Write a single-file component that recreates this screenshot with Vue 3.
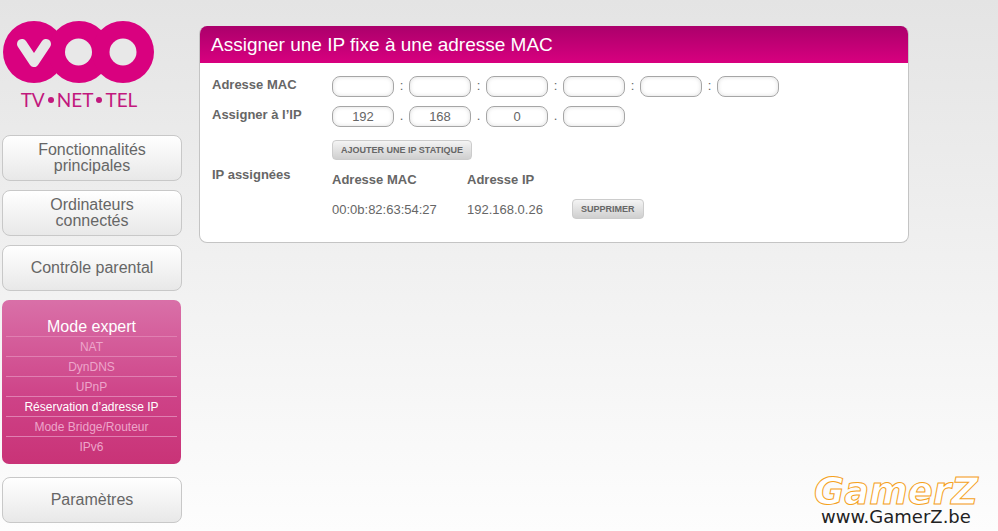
<script setup>
import { ref } from 'vue'

const mainLinks = ['Fonctionnalités principales', 'Ordinateurs connectés', 'Contrôle parental']
const expertLinks = ['NAT', 'DynDNS', 'UPnP', 'Réservation d’adresse IP', 'Mode Bridge/Routeur', 'IPv6']
const current = 'Réservation d’adresse IP'

const mac = ref(['', '', '', '', '', ''])
const ip = ref(['192', '168', '0', ''])
const assigned = ref([{ mac: '00:0b:82:63:54:27', ip: '192.168.0.26' }])

function addEntry() {
  assigned.value.push({ mac: mac.value.join(':'), ip: ip.value.join('.') })
}
function removeEntry(index) {
  assigned.value.splice(index, 1)
}
</script>

<template>
  <div class="page">
    <aside class="sidebar">
      <a class="logo" href="#" aria-label="VOO">
        <svg class="mark" viewBox="0 0 154 64" aria-hidden="true">
          <g class="discs">
            <circle cx="32" cy="32" r="31" />
            <circle cx="77" cy="32" r="31" />
            <circle cx="121" cy="32" r="31" />
          </g>
          <path class="vee" d="M20 24L32 42L44 24" />
          <circle class="hole" cx="76.500" cy="32" r="13.500" />
          <circle class="hole" cx="121" cy="32" r="13.500" />
        </svg>
        <span class="tagline"><span>TV</span><i></i><span>NET</span><i></i><span>TEL</span></span>
      </a>

      <nav class="menu">
        <a v-for="link in mainLinks" :key="link" class="tile" href="#"><span>{{ link }}</span></a>
        <section class="expert">
          <a class="expert-title" href="#">Mode expert</a>
          <ul>
            <li v-for="link in expertLinks" :key="link">
              <a href="#" :class="{ active: link === current }">{{ link }}</a>
            </li>
          </ul>
        </section>
        <a class="tile" href="#"><span>Paramètres</span></a>
      </nav>
    </aside>

    <main class="card">
      <h1>Assigner une IP fixe à une adresse MAC</h1>
      <form class="body" @submit.prevent="addEntry">
        <label class="label" for="mac0">Adresse MAC</label>
        <div class="fields">
          <template v-for="(part, i) in mac" :key="i">
            <span v-if="i" class="sep">:</span>
            <input :id="'mac' + i" v-model="mac[i]" type="text" maxlength="2" :aria-label="i ? 'Adresse MAC ' + (i + 1) : null">
          </template>
        </div>

        <label class="label" for="ip0">Assigner à l’IP</label>
        <div class="fields">
          <template v-for="(part, i) in ip" :key="i">
            <span v-if="i" class="sep">.</span>
            <input :id="'ip' + i" v-model="ip[i]" type="text" maxlength="3" :aria-label="i ? 'Adresse IP ' + (i + 1) : null">
          </template>
        </div>

        <div class="action"><button class="small" type="submit">AJOUTER UNE IP STATIQUE</button></div>

        <span id="assigned" class="label">IP assignées</span>
        <table aria-labelledby="assigned">
          <thead>
            <tr><th class="col-mac">Adresse MAC</th><th class="col-ip">Adresse IP</th><td></td></tr>
          </thead>
          <tbody>
            <tr v-for="(entry, i) in assigned" :key="i">
              <td>{{ entry.mac }}</td>
              <td>{{ entry.ip }}</td>
              <td><button class="small" type="button" @click="removeEntry(i)">SUPPRIMER</button></td>
            </tr>
          </tbody>
        </table>
      </form>
    </main>

    <a class="watermark" href="#">
      <span class="brand">GamerZ</span>
      <span class="site">www.GamerZ.be</span>
    </a>
  </div>
</template>

<style>
body {
  margin: 0;
  background: #fdfdfd;
}
</style>

<style scoped>
.page {
  box-sizing: border-box;
  display: flex;
  align-items: flex-start;
  gap: 17px;
  min-height: 100vh;
  padding: 20px 16px 8px 2px;
  position: relative;
  background: linear-gradient(#e4e4e4, #fdfdfd);
  font-family: "Liberation Sans", Arial, sans-serif;
  font-size: 13px;
  color: #666;
}
a {
  color: inherit;
  text-decoration: none;
}

.sidebar {
  flex: 0 0 180px;
}
.logo {
  display: block;
  height: 115px;
}
.mark {
  display: block;
  width: 154px;
  height: 64px;
}
.discs {
  fill: #d9017f;
}
.hole {
  fill: #e8e8e8;
}
.vee {
  fill: none;
  stroke: #e8e8e8;
  stroke-width: 10;
  stroke-linecap: round;
  stroke-linejoin: round;
}
.tagline {
  display: flex;
  align-items: center;
  justify-content: center;
  gap: 3px;
  width: 154px;
  margin-top: 6px;
  font-family: Lato, sans-serif;
  font-size: 19px;
  line-height: 20px;
  color: #c2187d;
}
.tagline i {
  width: 6px;
  height: 6px;
  border-radius: 50%;
  background: #c2187d;
}

.menu {
  display: flex;
  flex-direction: column;
  gap: 9px;
}
.tile {
  box-sizing: border-box;
  display: flex;
  align-items: center;
  justify-content: center;
  min-height: 46px;
  padding: 0 30px;
  border: 1px solid #c8c8c8;
  border-radius: 8px;
  background: linear-gradient(#fff, #e8e8e8);
  font-size: 16px;
  line-height: 16px;
  text-align: center;
}
.tile:nth-child(3) {
  padding: 0 10px;
}
.expert {
  margin: 0 1px 4px 0;
  padding: 18px 4px 8px;
  border-radius: 7px;
  background: linear-gradient(#d970a8, #ce4287 60%, #c93377);
  text-align: center;
}
.expert-title {
  display: block;
  font-size: 16px;
  line-height: 18px;
  color: #fff;
}
.expert ul {
  margin: 0;
  padding: 0;
  list-style: none;
}
.expert li {
  border-top: 1px solid #e07fb1;
  font-size: 12px;
  line-height: 21px;
  height: 19px;
  padding: 0 3px;
  color: #eda5ca;
}
.expert .active {
  color: #fff;
}

.card {
  flex: 0 1 710px;
  box-sizing: border-box;
  margin-top: 6px;
  border: 1px solid #c4c4c4;
  border-top: 0;
  border-radius: 8px;
  overflow: hidden;
  background: #fff;
}
h1 {
  margin: 0;
  padding: 0 11px;
  background: linear-gradient(#ab006b, #d8007f);
  color: #fff;
  font-size: 19px;
  font-weight: 400;
  line-height: 37px;
}
.body {
  display: grid;
  grid-template-columns: 120px 1fr;
  padding: 13px 12px 18px;
}
.label {
  font-weight: 700;
  line-height: 18px;
}
.fields {
  display: flex;
  height: 30px;
}
input {
  box-sizing: border-box;
  width: 62px;
  height: 21px;
  margin: 0;
  padding: 0 4px;
  border: 1px solid #a6a6a6;
  border-radius: 8px;
  background: #fff;
  box-shadow: inset 0 0 4px #ddd;
  color: #666;
  font: 13px "Liberation Sans", Arial, sans-serif;
  text-align: center;
}
.sep {
  flex: 0 0 15px;
  line-height: 20px;
  text-align: center;
}
.action {
  grid-column: 2;
  height: 26px;
  padding-top: 4px;
}
.small {
  display: block;
  height: 20px;
  padding: 0 8px;
  border: 1px solid #ccc;
  border-radius: 4px;
  background: linear-gradient(#f4f4f4, #cfcfcf);
  color: #666;
  font: 700 9px "Liberation Sans", Arial, sans-serif;
}
table {
  justify-self: start;
  margin-top: -2px;
  border-collapse: collapse;
}
th,
td {
  height: 30px;
  padding: 0;
  text-align: left;
}
.col-mac {
  width: 135px;
}
.col-ip {
  width: 105px;
}

.watermark {
  position: absolute;
  right: 20px;
  bottom: 6px;
  display: flex;
  flex-direction: column;
  align-items: center;
  font-family: "DejaVu Sans", sans-serif;
}
.brand {
  color: #fff;
  -webkit-text-stroke: 1px #f5a21c;
  font-size: 37px;
  font-style: italic;
  font-weight: 700;
  line-height: 34px;
}
.site {
  color: #222;
  font-size: 18px;
  line-height: 16px;
}
</style>
